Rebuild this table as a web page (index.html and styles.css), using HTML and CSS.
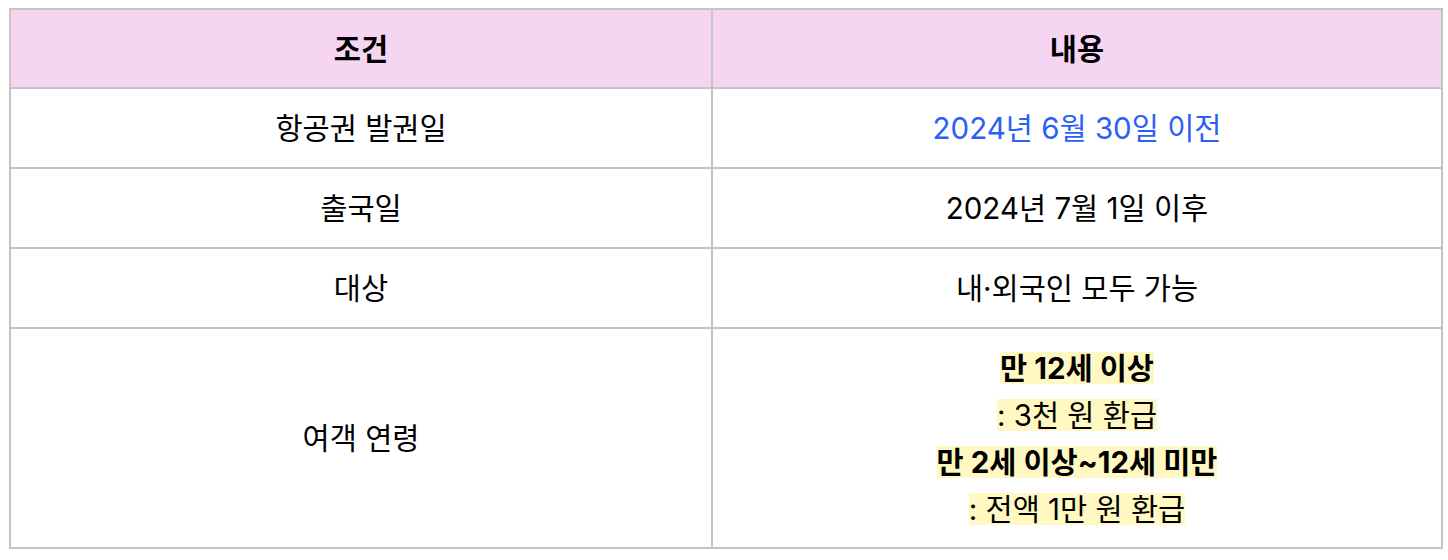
FILE: index.html
```html
<!DOCTYPE html>
<html lang="ko">
<head>
<meta charset="utf-8">
<link rel="stylesheet" href="styles.css">
</head>
<body>
<table class="info">
  <thead>
    <tr><th class="c1">조건</th><th class="c2">내용</th></tr>
  </thead>
  <tbody>
    <tr><td>항공권 발권일</td><td class="blue">2024년 6월 30일 이전</td></tr>
    <tr><td>출국일</td><td>2024년 7월 1일 이후</td></tr>
    <tr><td>대상</td><td>내·외국인 모두 가능</td></tr>
    <tr class="tall">
      <td>여객 연령</td>
      <td>
        <div class="ln"><span class="hl b">만 12세 이상</span></div>
        <div class="ln"><span class="hl">: 3천 원 환급</span></div>
        <div class="ln"><span class="hl b">만 2세 이상~12세 미만</span></div>
        <div class="ln"><span class="hl">: 전액 1만 원 환급</span></div>
      </td>
    </tr>
  </tbody>
</table>
</body>
</html>
```

FILE: styles.css
```css
html, body {
  margin: 0;
  padding: 0;
  background: #ffffff;
}
body {
  font-family: Inter, "Noto Sans CJK KR", sans-serif;
  color: #000;
  font-size: 29.5px;
}
.info {
  margin: 8px 5px 0 9px;
  width: calc(100% - 14px);
  border-collapse: separate;
  border-spacing: 0;
  border-top: 2px solid #c4c4c4;
  border-left: 2px solid #c4c4c4;
  table-layout: fixed;
}
.info th, .info td {
  border-right: 2px solid #c4c4c4;
  border-bottom: 2px solid #c4c4c4;
  text-align: center;
  vertical-align: middle;
  padding: 0 10px;
  line-height: 46px;
  box-sizing: border-box;
}
.info th {
  background: #f6d5f3;
  font-weight: 700;
  height: 79px;
}
.info td {
  height: 80px;
}
.c1 { width: 702px; }
.blue { color: #2b60f4; }
.tall td { height: 220px; padding-top: 14px; padding-bottom: 14px; }
.ln {
  height: 47px;
  display: flex;
  align-items: center;
  justify-content: center;
}
.hl {
  display: inline-block;
  background: #fff8c2;
  line-height: 32px;
  height: 32px;
}
.b { font-weight: 700; }
```
